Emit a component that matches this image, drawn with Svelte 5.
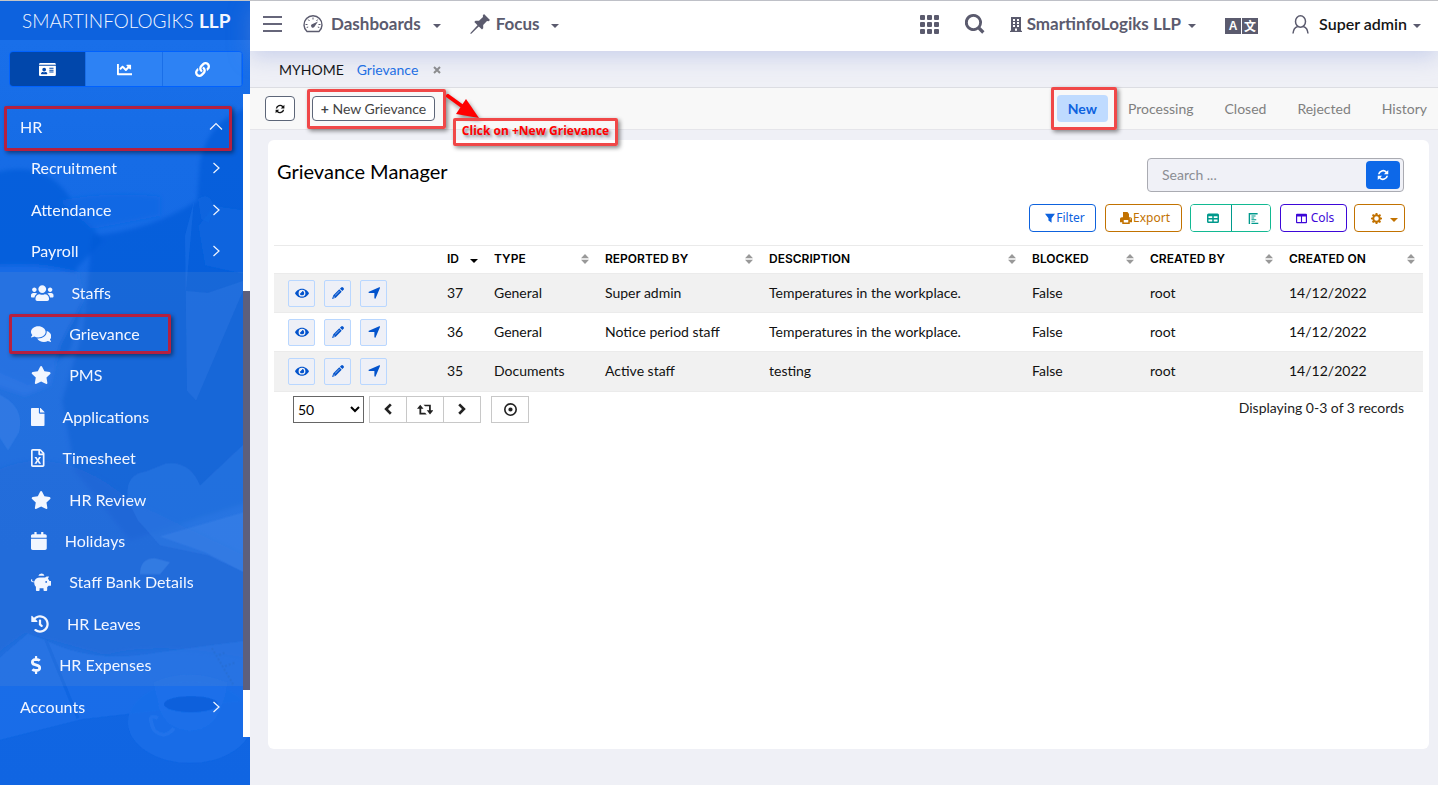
<script>
  const sideTabs = ['card', 'chart', 'link'];
  const groups = ['Recruitment', 'Attendance', 'Payroll'];
  const items = [
    { icon: 'users', label: 'Staffs' },
    { icon: 'comments', label: 'Grievance', marked: true },
    { icon: 'star', label: 'PMS' },
    { icon: 'file', label: 'Applications' },
    { icon: 'excel', label: 'Timesheet' },
    { icon: 'star', label: 'HR Review' },
    { icon: 'calendar', label: 'Holidays' },
    { icon: 'piggy', label: 'Staff Bank Details' },
    { icon: 'history', label: 'HR Leaves' },
    { icon: 'dollar', label: 'HR Expenses' }
  ];
  const filters = ['Processing', 'Closed', 'Rejected', 'History'];
  const columns = ['TYPE', 'REPORTED BY', 'DESCRIPTION', 'BLOCKED', 'CREATED BY', 'CREATED ON'];
  const rows = [
    ['37', 'General', 'Super admin', 'Temperatures in the workplace.', 'False', 'root', '14/12/2022'],
    ['36', 'General', 'Notice period staff', 'Temperatures in the workplace.', 'False', 'root', '14/12/2022'],
    ['35', 'Documents', 'Active staff', 'testing', 'False', 'root', '14/12/2022']
  ];
  // Solid glyphs: [viewBox width, viewBox height, path]
  const glyphs = {
    users: [640, 512, 'M96 224c35.3 0 64-28.7 64-64s-28.7-64-64-64-64 28.7-64 64 28.7 64 64 64zm448 0c35.3 0 64-28.7 64-64s-28.7-64-64-64-64 28.7-64 64 28.7 64 64 64zm32 32h-64c-17.6 0-33.5 7.1-45.1 18.6 40.3 22.1 68.9 62 75.1 109.4h66c17.7 0 32-14.3 32-32v-32c0-35.3-28.7-64-64-64zm-256 0c61.9 0 112-50.1 112-112S381.9 32 320 32 208 82.1 208 144s50.1 112 112 112zm76.8 32h-8.3c-20.8 10-43.9 16-68.5 16s-47.6-6-68.5-16h-8.3C179.6 288 128 339.6 128 403.2V432c0 26.5 21.5 48 48 48h288c26.5 0 48-21.5 48-48v-28.8c0-63.6-51.6-115.2-115.2-115.2zm-223.7-13.4C161.5 263.1 145.6 256 128 256H64c-35.3 0-64 28.7-64 64v32c0 17.7 14.3 32 32 32h65.9c6.3-47.4 34.9-87.3 75.2-109.4z'],
    comments: [576, 512, 'M416 192c0-88.4-93.1-160-208-160S0 103.6 0 192c0 34.3 14.1 65.9 38 92-13.4 30.2-35.5 54.2-35.8 54.5-2.2 2.3-2.8 5.7-1.5 8.7S4.8 352 8 352c36.6 0 66.9-12.3 88.7-25 32.2 15.7 70.3 25 111.3 25 114.9 0 208-71.6 208-160zm122 220c23.9-26 38-57.7 38-92 0-66.9-53.5-124.2-129.3-148.1.9 6.6 1.3 13.3 1.3 20.1 0 105.9-107.7 192-240 192-10.8 0-21.3-.8-31.7-1.9C207.8 439.6 281.8 480 368 480c41 0 79.1-9.2 111.3-25 21.8 12.7 52.1 25 88.7 25 3.2 0 6.1-1.9 7.3-4.8 1.3-2.9.7-6.3-1.5-8.7-.3-.3-22.4-24.2-35.8-54.5z'],
    star: [576, 512, 'M259.3 17.8L194 150.2 47.9 171.5c-26.2 3.8-36.7 36.1-17.7 54.6l105.7 103-25 145.5c-4.5 26.3 23.2 46 46.4 33.7L288 439.6l130.7 68.7c23.2 12.2 50.9-7.4 46.4-33.7l-25-145.5 105.7-103c19-18.5 8.5-50.8-17.7-54.6L382 150.2 316.7 17.8c-11.7-23.6-45.6-23.9-57.4 0z'],
    file: [384, 512, 'M224 136V0H24C10.7 0 0 10.7 0 24v464c0 13.3 10.7 24 24 24h336c13.3 0 24-10.7 24-24V160H248c-13.2 0-24-10.8-24-24zm160-14.1v6.1H256V0h6.1c6.4 0 12.5 2.5 17 7l97.9 98c4.5 4.5 7 10.6 7 16.9z'],
    excel: [384, 512, 'M370 98L286 14C277 5 265 0 252 0H48C22 0 0 22 0 48v416c0 26 22 48 48 48h288c26 0 48-22 48-48V132c0-13-5-25-14-34zM256 52l76 76h-76zM336 464H48V48h160v104c0 13 11 24 24 24h104zM98 224h60l34 58 34-58h60l-64 94 66 98h-62l-34-60-34 60H96l66-98z'],
    calendar: [448, 512, 'M12 192h424c6.6 0 12 5.4 12 12v260c0 26.5-21.5 48-48 48H48c-26.5 0-48-21.5-48-48V204c0-6.6 5.4-12 12-12zm436-44v-36c0-26.5-21.5-48-48-48h-48V12c0-6.6-5.4-12-12-12h-40c-6.6 0-12 5.4-12 12v52H160V12c0-6.6-5.4-12-12-12h-40c-6.6 0-12 5.4-12 12v52H48C21.5 64 0 85.5 0 112v36c0 6.6 5.4 12 12 12h424c6.6 0 12-5.4 12-12z'],
    piggy: [576, 512, 'M210 84a88 84 0 0 1 172-4c-22 0-44 0-62 0h-66c-16 0-32 1-44 4zM566 224h-42c-10-22-24-42-42-58l30-70h-40c-30 0-56 14-74 34-6-1-11-2-70-2h-76c-76 0-140 46-156 112H56c-16 0-30-16-22-34 4-10 4-26-10-26C10 180 0 186 0 204c0 30 26 56 56 56h36c0 58 16 106 48 132v96c0 13 8 24 24 24h56c14 0 24-10 24-24v-56h112v56c0 13 10 24 24 24h56c14 0 24-10 24-24v-88c16-12 28-26 38-40h58c6 0 20-8 20-16V240c0-10-4-16-10-16zm-134 56a26 26 0 1 1 0-52 26 26 0 0 1 0 52z'],
    history: [512, 512, 'M504 255.531c.253 136.64-111.18 248.372-247.82 248.468-59.015.042-113.223-20.53-155.822-54.911-11.077-8.94-11.905-25.541-1.839-35.607l11.267-11.267c8.609-8.609 22.353-9.551 31.891-1.984C173.062 425.135 212.781 440 256 440c101.705 0 184-82.311 184-184 0-101.705-82.311-184-184-184-48.814 0-93.149 18.969-126.068 49.932l50.754 50.754c10.08 10.08 2.941 27.314-11.313 27.314H24c-8.837 0-16-7.163-16-16V38.627c0-14.254 17.234-21.393 27.314-11.314l49.372 49.372C129.209 34.136 189.552 8 256 8c136.81 0 247.747 110.78 248 247.531zm-180.912 78.784l9.823-12.63c8.138-10.463 6.253-25.542-4.21-33.679L288 256.349V152c0-13.255-10.745-24-24-24h-16c-13.255 0-24 10.745-24 24v135.651l65.409 50.874c10.463 8.137 25.541 6.253 33.679-4.21z'],
    dollar: [288, 512, 'M209.2 233.4l-108-31.6C88.7 198.2 80 186.5 80 173.5c0-16.3 13.2-29.5 29.5-29.5h66.3c12.2 0 24.2 3.7 34.2 10.5 6.1 4.1 14.3 3.1 19.5-2l34.8-34c7.1-6.9 6.1-18.4-1.8-24.5C238 74.8 207.4 64.1 176 64V16c0-8.8-7.2-16-16-16h-32c-8.8 0-16 7.2-16 16v48h-2.5C45.8 64-5.4 118.7.5 183.6c4.2 46.1 39.4 83.6 83.8 96.6l102.5 30c12.5 3.7 21.2 15.3 21.2 28.3 0 16.3-13.2 29.5-29.5 29.5h-66.3C100 368 88 364.3 78 357.5c-6.1-4.1-14.3-3.1-19.5 2l-34.8 34c-7.1 6.9-6.1 18.4 1.8 24.5 24.5 19.2 55.1 29.9 86.5 30v48c0 8.8 7.2 16 16 16h32c8.8 0 16-7.2 16-16v-48.2c46.6-.9 90.3-28.6 105.7-72.7 21.5-61.6-14.6-124.8-72.5-141.7z'],
    card: [576, 512, 'M528 32H48C22 32 0 54 0 80v16h576V80c0-26-22-48-48-48zM0 432c0 26 22 48 48 48h480c26 0 48-22 48-48V128H0zM352 200h144v32H352zM352 264h144v32H352zM352 328h144v32H352zM176 192a64 64 0 1 1 0 128 64 64 0 0 1 0-128zM68 392c8-28 30-50 60-50 30 12 66 12 96 0 30 0 52 22 60 50 2 10-4 24-16 24H84c-12 0-18-14-16-24z'],
    chart: [512, 512, 'M64 64H0v360c0 13 11 24 24 24h488v-64H64zM344 96h120c9 0 16 7 16 16v118c0 22-26 32-40 18l-32-32-82 82c-12 12-32 12-45 0l-89-89-66 66-38-40c-6-6-6-16 0-22l80-80c12-12 32-12 45 0l89 89 58-58-32-32c-14-14-4-36 16-36z'],
    link: [512, 512, 'M326.612 185.391c59.747 59.809 58.927 155.698.36 214.59-.11.12-.24.25-.36.37l-67.2 67.2c-59.27 59.27-155.699 59.262-214.96 0-59.27-59.26-59.27-155.7 0-214.96l37.106-37.106c9.84-9.84 26.786-3.3 27.294 10.606.648 17.722 3.826 35.527 9.69 52.721 1.986 5.822.567 12.262-3.783 16.612l-13.087 13.087c-28.026 28.026-28.905 73.66-1.155 101.96 28.024 28.579 74.086 28.749 102.325.51l67.2-67.19c28.191-28.191 28.073-73.757 0-101.83-3.701-3.694-7.429-6.564-10.341-8.569a16.037 16.037 0 0 1-6.947-12.606c-.396-10.567 3.348-21.456 11.698-29.806l21.054-21.055c5.521-5.521 14.182-6.199 20.584-1.731a152.482 152.482 0 0 1 20.522 17.197zM467.547 44.449c-59.261-59.262-155.69-59.27-214.96 0l-67.2 67.2c-.12.12-.25.25-.36.37-58.566 58.892-59.387 154.781.36 214.59a152.454 152.454 0 0 0 20.521 17.196c6.402 4.468 15.064 3.789 20.584-1.731l21.054-21.055c8.35-8.35 12.094-19.239 11.698-29.806a16.037 16.037 0 0 0-6.947-12.606c-2.912-2.005-6.64-4.875-10.341-8.569-28.073-28.073-28.191-73.639 0-101.83l67.2-67.19c28.239-28.239 74.3-28.069 102.325.51 27.75 28.3 26.872 73.934-1.155 101.96l-13.087 13.087c-4.35 4.35-5.769 10.79-3.783 16.612 5.864 17.194 9.042 34.999 9.69 52.721.509 13.906 17.454 20.446 27.294 10.606l37.106-37.106c59.271-59.259 59.271-155.699.001-214.959z'],
    refresh: [16, 16, 'M1.2 7A7 7 0 0 1 13 3.2L15 1.2V7H9.2L11.4 4.800A4.800 4.800 0 0 0 3.400 7ZM14.800 9A7 7 0 0 1 3 12.800L1 14.800V9H6.800L4.600 11.200A4.800 4.800 0 0 0 12.600 9Z'],
    funnel: [16, 16, 'M0 1H16L10.5 8.5V15.5L5.5 12V8.5Z'],
    printer: [16, 16, 'M4 0H10L12 2.5V7H4ZM0 9Q0 7 2.500 7H13.500Q16 7 16 9V13.500H13V16H3V13.500H0ZM5 10.500V14H11V10.500ZM13 8.500V10H14.500V8.500Z'],
    table: [16, 16, 'M2 2H14Q16 2 16 4V12.5Q16 14.500 14 14.500H2Q0 14.500 0 12.500V4Q0 2 2 2ZM2 5.500V8H7V5.500ZM9 5.500V8H14V5.500ZM2 10V12.500H7V10ZM9 10V12.500H14V10Z'],
    chartbar: [16, 16, 'M1 0H14V2H3V16H1ZM5 3.500H11V5H5ZM5 6.500H9V8H5ZM5 9H12V10.500H5ZM5 11.500H10V12.500H5ZM5 14H15V16H5Z'],
    colsicon: [16, 16, 'M1.5 1H14.5Q16 1 16 2.500V13.500Q16 15 14.500 15H1.500Q0 15 0 13.500V2.500Q0 1 1.500 1ZM1.700 5V13.200H7.200V5ZM8.800 5V13.200H14.300V5Z'],
    gear: [16, 16, 'M6.8 0H9.2L9.7 2.2 11.1 2.8 13 1.5 14.6 3.2 13.3 5 13.9 6.4 16 6.8V9.2L13.9 9.6 13.3 11 14.6 12.8 12.9 14.5 11 13.3 9.7 13.9 9.2 16H6.8L6.3 13.9 4.9 13.3 3.1 14.5 1.4 12.8 2.7 11 2.1 9.6 0 9.2V6.8L2.1 6.4 2.7 5 1.4 3.2 3 1.5 4.9 2.7 6.3 2.2ZM8 4.700A3.300 3.300 0 1 0 8 11.300 3.300 3.300 0 1 0 8 4.700Z'],
    eye: [16, 16, 'M8 3C12 3 15 6 16 8.2 15 10.5 12 13.4 8 13.4S1 10.5 0 8.2C1 6 4 3 8 3ZM8 4.300A3.900 3.900 0 1 0 8 12.100 3.900 3.900 0 1 0 8 4.300ZM8 5.700A2.500 2.500 0 1 1 5.500 8.200H6.700Q6.800 7 8 6.900Z'],
    pencil: [16, 16, 'M10.600 2.200 12.200.6Q13.500-.5 14.700.7L15.400 1.400Q16.500 2.500 15.400 3.800L13.800 5.400ZM9.700 3.100 12.900 6.300 5 14.200 0 16 1.800 11ZM9.700 5.200 4 10.900 4.500 11.400 10.200 5.700ZM2.600 12.400 2 14 2.500 14.200 3.900 13.600Z'],
    locate: [16, 16, 'M15 .4Q16.400 0 16 1.400L10.200 15Q9.200 16.500 8.500 14.800V7.900H1.500Q-.3 7.200 1.200 6.200Z'],
    prev: [16, 16, 'M10.5.5 13 3 8 8 13 13 10.500 15.500 3 8Z'],
    next: [16, 16, 'M5.500.5 3 3 8 8 3 13 5.500 15.500 13 8Z'],
    retweet: [20, 16, 'M4 2 8 7H5.200V12H10L12 14H3V7H0ZM8 2H17V9H20L16 14 12 9H14.800V4H10Z'],
    target: [16, 16, 'M8 0A8 8 0 1 1 8 16 8 8 0 1 1 8 0ZM8 2A6 6 0 1 0 8 14 6 6 0 1 0 8 2ZM8 5.400A2.600 2.600 0 1 1 8 10.600 2.600 2.600 0 1 1 8 5.400Z'],
    pin: [20, 20, 'M14 0 20 6 18.600 7.200 17 7 13.200 11 13.200 14.200 12 15.500 8.800 12.500 1 20 .2 19.300 7.500 11.200 4.300 8 5.500 6.800 9 6.800 13 3 12.800 1.400Z'],
    search: [20, 20, 'M8.5 0A8.5 8.5 0 0 1 15.500 13.200L19.500 17.200 17.200 19.700 13 15.600A8.500 8.500 0 1 1 8.500 0ZM8.500 2.800A5.700 5.700 0 1 0 8.500 14.200 5.700 5.700 0 1 0 8.500 2.800Z'],
    building: [12, 15, 'M1 0H11V13.8H12V15H0V13.8H1ZM3 2V4H5V2ZM7 2V4H9V2ZM3 5V7H5V5ZM7 5V7H9V5ZM3 8V10H5V8ZM7 8V10H9V8ZM5 11.500V13.800H7V11.500Z']
  };
</script>

{#snippet icon(name, size)}
  <svg height={size} viewBox="0 0 {glyphs[name][0]} {glyphs[name][1]}" aria-hidden="true">
    <path fill="currentColor" fill-rule="evenodd" d={glyphs[name][2]} />
  </svg>
{/snippet}

{#snippet chevron()}
  <svg class="chev" width="8" height="12" viewBox="0 0 8 12" aria-hidden="true"><path d="M1.5 1 7 6 1.5 11" fill="none" stroke="currentColor" stroke-width="1.2" /></svg>
{/snippet}

<div class="app">
  <aside class="sidebar">
    <svg class="scene" viewBox="0 0 250 785" preserveAspectRatio="none" aria-hidden="true">
      <defs>
        <linearGradient id="shade" x2="0" y2="1">
          <stop offset="0" stop-color="#1a70ea" /><stop offset=".2" stop-color="#166ce6" />
          <stop offset=".7" stop-color="#1267e2" /><stop offset="1" stop-color="#1065e2" />
        </linearGradient>
        <filter id="soft" x="-10%" y="-10%" width="120%" height="120%"><feGaussianBlur stdDeviation="2" /></filter>
        <filter id="crisp"><feGaussianBlur stdDeviation=".6" /></filter>
      </defs>
      <rect width="250" height="785" fill="url(#shade)" />
      <g filter="url(#soft)">
        <path d="M-5 172Q40 160 65 190L103 240 76 268 83 305 70 350 30 385-5 370Z" fill="#045bd8" opacity=".75" />
        <path d="M-5 265Q30 262 60 268L78 272 83 300 60 345 50 385 25 395-5 385Z" fill="#2475ee" opacity=".55" />
        <path d="M60 200Q110 190 160 196L160 215 92 228Z" fill="#1268e4" opacity=".8" />
        <path d="M255 105Q210 115 200 160L197 200Q150 230 92 235L83 330 62 400 75 470 130 540 255 500Z" fill="#045ad7" opacity=".7" />
        <path d="M-5 470Q60 440 130 500L255 560V660Q160 640 105 655L25 633-5 655Z" fill="#0c60da" opacity=".55" />
      </g>
      <g filter="url(#crisp)">
        <path d="M215 205 250 210V275L205 265 198 225Z" fill="#1067e2" opacity=".5" />
        <path d="M198 198Q210 190 214 206L209 222 201 218Z" fill="#1d70e6" opacity=".35" />
        <path d="M194 200 185 235 187 390 196 400 243 290V280L208 292 186 290" fill="#2e7def" opacity=".3" />
        <path d="M-5 392Q26 404 19 432L8 450-5 430Z" fill="#3180ef" opacity=".45" />
        <path d="M128 500Q124 474 146 471L166 463Q190 460 200 485L250 438V575L208 555 160 545 138 520Z" fill="#2b7bee" opacity=".4" />
        <path d="M160 536 250 510V575L205 552Z" fill="#3a86f4" opacity=".35" />
        <path d="M140 574Q140 558 155 558L170 562 160 574Z" fill="#4790f6" opacity=".4" />
        <path d="M28 633 46 640Q90 662 145 654T250 640V700L82 719 0 740V657Z" fill="#1f74ee" opacity=".5" />
        <path d="M46 640 78 718" stroke="#0d60dc" stroke-width="3" opacity=".5" />
        <path d="M212 648 233 684M219 655 226 652M225 666 236 662" fill="none" stroke="#1d66d0" stroke-width="2" stroke-dasharray="2 2" opacity=".6" />
        <ellipse cx="190" cy="722" rx="62" ry="41" fill="#1b70ea" opacity=".65" />
        <path d="M153 682Q188 666 228 682L222 705Q214 730 190 731 160 728 158 700Z" fill="#1d71ea" opacity=".8" />
        <ellipse cx="191" cy="704" rx="27" ry="8" fill="#0b60dc" />
        <path d="M158 718Q146 712 154 730 165 740 174 728" fill="none" stroke="#2a7aee" stroke-width="4" opacity=".5" />
      </g>
    </svg>
    <a class="brand" href="#home">SMARTINFOLOGIKS <b>LLP</b></a>
    <div class="side-tabs">
      {#each sideTabs as t, i}
        <button class:on={i === 0} aria-label={t}>{@render icon(t, 15)}</button>
      {/each}
    </div>
    <nav class="menu">
      <div class="top">
        <a class="row root" href="#hr">HR
          <svg class="chev up" width="14" height="9" viewBox="0 0 14 9" aria-hidden="true"><path d="M1 7.5 7 1.5 13 7.5" fill="none" stroke="currentColor" stroke-width="1.2" /></svg>
          <span class="mark hr-mark"></span>
        </a>
        {#each groups as g}
          <a class="row sub" href="#{g}">{g}{@render chevron()}</a>
        {/each}
      </div>
      <div class="list">
        {#each items as it}
          <a class="row item" href="#{it.label}">
            {@render icon(it.icon, 18)}{it.label}
            {#if it.marked}<span class="mark item-mark"></span>{/if}
          </a>
        {/each}
      </div>
      <a class="row root last" href="#accounts">Accounts{@render chevron()}</a>
      <div class="track"><div class="thumb"></div></div>
    </nav>
  </aside>

  <main>
    <header>
      <button class="plain burger" aria-label="Toggle menu"><i></i><i></i><i></i></button>
      <a class="nav dash" href="#dashboards">
        <svg width="20" height="18" viewBox="0 0 20 18" aria-hidden="true">
          <path d="M4 16.5A9 9 0 1 1 16 16.5Z" fill="none" stroke="currentColor" stroke-width="1.4" stroke-linejoin="round" />
          <path d="M10 2.5V4.5M5.2 4.5 6.5 6M2.5 9.5H4.5M15.5 9.5H17.5M14.7 4.5 13.5 6M3.7 12.5 5.2 12M16.3 12.5 14.8 12" stroke="currentColor" stroke-width="1" />
          <path d="M8.5 9.5 15 6.5 11.3 12A1.8 1.8 0 0 1 8.5 9.5Z" fill="currentColor" />
        </svg>
        Dashboards <i class="caret"></i>
      </a>
      <a class="nav focus" href="#focus">{@render icon('pin', 20)} Focus <i class="caret"></i></a>
      <div class="right">
        <button class="plain" aria-label="Apps">
          <svg width="19" height="19" viewBox="0 0 19 19" fill="currentColor" aria-hidden="true">
            {#each [0, 7, 14] as x}{#each [0, 7, 14] as y}<rect {x} {y} width="5" height="5" rx="1" />{/each}{/each}
          </svg>
        </button>
        <button class="plain search-btn" aria-label="Search">{@render icon('search', 20)}</button>
        <a class="nav org" href="#org">{@render icon('building', 15)} SmartinfoLogiks LLP <i class="caret"></i></a>
        <button class="plain lang" aria-label="Language"><span>A</span><span class="cjk">文</span></button>
        <a class="nav user" href="#user">
          <svg width="17" height="19" viewBox="0 0 17 19" fill="none" stroke="#5b5b6e" stroke-width="1.5" aria-hidden="true">
            <ellipse cx="8.5" cy="6.5" rx="5" ry="5.7" /><path d="M1 18.5Q1.5 12.5 5.8 11.5M16 18.5Q15.5 12.5 11.2 11.5" />
          </svg>
          Super admin <i class="caret"></i>
        </a>
      </div>
    </header>

    <div class="tabs">
      <a href="#myhome">MYHOME</a>
      <a class="current" href="#grievance">Grievance</a>
      <button class="plain" aria-label="Close tab">
        <svg width="8" height="8" viewBox="0 0 8 8" aria-hidden="true"><path d="M1 1 7 7M7 1 1 7" stroke="#8c8c8c" stroke-width="2" /></svg>
      </button>
    </div>

    <div class="toolbar">
      <button class="tool" aria-label="Refresh">{@render icon('refresh', 10)}</button>
      <div class="new-wrap">
        <button class="tool new"><b>+</b> New Grievance</button>
        <span class="mark red new-mark"></span>
        <svg class="arrow" width="38" height="32" viewBox="0 0 38 32" aria-hidden="true">
          <path d="M2 3 20 16" stroke="#f00" stroke-width="4" stroke-linecap="round" /><path d="M20 6 33 25 10 21Z" fill="#f00" />
        </svg>
        <span class="mark red callout">Click on +New Grievance</span>
      </div>
      <nav class="status">
        <a class="active" href="#new">New<span class="mark red tab-mark"></span></a>
        {#each filters as f}<a href="#{f}">{f}</a>{/each}
      </nav>
    </div>

    <section class="card">
      <div class="card-head">
        <h1>Grievance Manager</h1>
        <div class="search">
          <input type="text" placeholder="Search ..." aria-label="Search records" />
          <button aria-label="Reload">{@render icon('refresh', 12)}</button>
        </div>
      </div>
      <div class="actions">
        <button class="act blue">{@render icon('funnel', 10)}Filter</button>
        <button class="act amber">{@render icon('printer', 12)}Export</button>
        <div class="pair">
          <button aria-label="Table view">{@render icon('table', 12)}</button>
          <button aria-label="Report view">{@render icon('chartbar', 11)}</button>
        </div>
        <button class="act purple">{@render icon('colsicon', 11)} Cols</button>
        <button class="act amber gear" aria-label="Settings">{@render icon('gear', 11)} <i class="caret"></i></button>
      </div>
      <table>
        <colgroup>
          <col class="c0" /><col class="c1" /><col class="c2" /><col class="c3" /><col class="c4" /><col class="c5" /><col class="c6" /><col class="c7" />
        </colgroup>
        <thead>
          <tr>
            <th aria-label="Actions"></th>
            <th><div class="th">ID <i class="caret"></i></div></th>
            {#each columns as c}
              <th><div class="th">{c}
                <svg width="8" height="10" viewBox="0 0 8 10" aria-hidden="true"><path d="M4 0 8 4.3H0ZM4 10 0 5.7H8Z" fill="#999" /></svg>
              </div></th>
            {/each}
          </tr>
        </thead>
        <tbody>
          {#each rows as r}
            <tr>
              <td>
                <div class="ops">
                  <button aria-label="View">{@render icon('eye', 14)}</button>
                  <button aria-label="Edit">{@render icon('pencil', 12)}</button>
                  <button aria-label="Forward">{@render icon('locate', 12)}</button>
                </div>
              </td>
              {#each r as cell}<td>{cell}</td>{/each}
            </tr>
          {/each}
        </tbody>
      </table>
      <div class="pager">
        <select aria-label="Records per page"><option>50</option></select>
        <div class="pages">
          <button aria-label="Previous">{@render icon('prev', 12)}</button>
          <button aria-label="Reload page">{@render icon('retweet', 13)}</button>
          <button aria-label="Next">{@render icon('next', 12)}</button>
        </div>
        <button class="locate" aria-label="Focus record">{@render icon('target', 13)}</button>
        <p>Displaying 0-3 of 3 records</p>
      </div>
    </section>
  </main>
</div>

<style>
  :global(body) { margin: 0; }
  * { box-sizing: border-box; }
  .app {
    display: grid;
    grid-template-columns: 250px minmax(0, 1fr);
    min-height: 100vh;
    border-top: 1px solid #c6c6c6;
    background: #eff0f6;
    color: #111;
    font: 14px/20px Lato, "Open Sans", sans-serif;
  }
  a { color: inherit; text-decoration: none; }
  button { font: inherit; color: inherit; cursor: pointer; padding: 0; }
  svg { display: block; flex: none; }
  .plain { border: 0; background: none; }
  .mark { position: absolute; border: 3px solid #b52040; border-radius: 2px; box-shadow: 2px 2px 4px rgba(0, 0, 0, .45); pointer-events: none; }
  .mark.red { border-color: #f04848; }
  .caret { width: 0; height: 0; border: 4px solid transparent; border-top-color: currentColor; border-bottom: 0; }

  .sidebar { position: relative; display: flex; flex-direction: column; background: #166be6; color: #f2f6ff; overflow: hidden; padding-bottom: 48px; }
  .scene { position: absolute; inset: 0; width: 100%; height: 100%; }
  .brand { position: relative; height: 39px; padding-left: 22px; font-size: 19px; line-height: 39px; font-weight: 300; background: #0d62de; white-space: nowrap; }
  .brand b { font-weight: 700; }
  .side-tabs { position: relative; display: grid; grid-template-columns: 76px 77px 1fr; height: 36px; margin: 11px 7px 7px 9px; border: 1px solid #0062ff; border-radius: 4px; overflow: hidden; flex: none; }
  .side-tabs button { display: grid; place-items: center; border: 0; border-right: 1px solid #1a6fe8; background: #2d82f4; color: #fff; }
  .side-tabs .on { background: #0147ab; }
  .menu { position: relative; flex: 1; padding: 12px 7px 0 0; font-size: 16px; }
  .top { display: grid; grid-auto-rows: 1fr; min-height: 166px; }
  .list { display: grid; grid-auto-rows: 1fr; min-height: 414px; background: rgba(110, 150, 200, .17); }
  .row { position: relative; display: flex; align-items: center; }
  .root { padding-left: 20px; }
  .sub { padding-left: 31px; }
  .item { padding-left: 31px; gap: 18px; }
  .last { height: 42px; }
  .chev { margin-left: auto; margin-right: 23px; }
  .up { margin-right: 20px; }
  .hr-mark { inset: 0 11px -3px 4px; }
  .item-mark { inset: 1px 72px 1px 9px; }
  .track { position: absolute; inset: 0 0 0 auto; width: 7px; background: #fff; padding: 197px 0 47px; }
  .thumb { height: 100%; background: #5d5f7c; }

  main { display: flex; flex-direction: column; min-width: 0; padding-bottom: 36px; }
  header { display: flex; align-items: center; height: 50px; padding: 0 17px 4px 13px; background: #fff; box-shadow: 0 6px 22px rgba(130, 150, 215, .35); color: #5b5b6e; flex: none; z-index: 1; }
  .burger { display: grid; gap: 5px; width: 19px; }
  .burger i { height: 2px; background: #66667a; }
  .nav { display: flex; align-items: center; gap: 8px; font-size: 17px; font-weight: 700; white-space: nowrap; }
  .nav .caret { margin-top: 4px; margin-left: 4px; }
  .dash { margin-left: 21px; }
  .focus { margin-left: 29px; gap: 6px; }
  .focus .caret { margin-left: 5px; }
  .right { display: flex; align-items: center; margin-left: auto; }
  .search-btn { margin-left: 26px; }
  .org { margin-left: 25px; gap: 5px; }
  .org .caret { margin-left: 2px; }
  .lang { display: flex; gap: 1px; margin-left: 29px; padding-top: 4px; }
  .lang span { width: 16px; height: 16px; background: #5b5b6e; color: #fff; font: 700 12px/16px "Liberation Sans", sans-serif; text-align: center; }
  .lang .cjk { font-family: "Noto Sans CJK SC", sans-serif; }
  .user { margin-left: 34px; gap: 10px; color: #151515; font-size: 16px; font-weight: 600; }
  .user .caret { margin-left: -4px; border-top-color: #5b5b6e; }

  .tabs { display: flex; align-items: center; height: 37px; padding: 2px 28px 0 29px; border-bottom: 1px solid #dcdde2; flex: none; }
  .current { margin-left: 13px; color: #1b6fe4; }
  .tabs button { margin-left: 15px; }
  .toolbar { display: flex; align-items: center; height: 42px; padding: 0 11px 0 15px; background: #f8f8f8; border-bottom: 1px solid #e5e5ea; flex: none; }
  .tool { display: grid; place-items: center; width: 30px; height: 25px; background: #fff; border: 1px solid #5d6678; border-radius: 4px; }
  .new-wrap { position: relative; margin-left: 17px; }
  .new { display: block; width: 123px; color: #444; line-height: 22px; }
  .new-mark { inset: -7px -11px -8px -5px; }
  .arrow { position: absolute; left: 134px; top: -3px; filter: drop-shadow(2px 3px 2px rgba(0, 0, 0, .4)); }
  .callout { left: 141px; top: 22px; width: 165px; height: 28px; color: #f00; font: 700 12px/20px "Open Sans", sans-serif; text-align: center; white-space: nowrap; text-shadow: 2px 2px 3px rgba(0, 0, 0, .45); }
  .status { display: flex; align-items: center; gap: 31px; margin-left: auto; color: #808080; }
  .active { position: relative; height: 27px; margin-right: -11px; padding: 0 11px; line-height: 27px; border-radius: 4px; background: #bfdbff; color: #0d62de; font-weight: 700; }
  .tab-mark { inset: -8px -9px -8px -6px; }

  .card { flex: 1; margin: 10px 9px 0 18px; padding: 18px 6px; background: #fff; border-radius: 6px; }
  .card-head { display: flex; justify-content: space-between; padding: 0 19px 0 3px; }
  h1 { margin: 0; font-size: 20px; line-height: 26px; font-weight: 400; color: #000; }
  .search { display: flex; width: 257px; height: 34px; padding: 2px 3px; border: 1px solid #aaabb2; border-radius: 4px; background: #f0f1f7; }
  .search input { flex: 1; min-width: 0; padding: 0 11px; border: 0; outline: 0; background: none; font: inherit; }
  .search input::placeholder { color: #8b8d93; }
  .search button { display: grid; place-items: center; width: 34px; border: 0; border-radius: 4px; background: #0d68e8; color: #fff; }
  .actions { display: flex; justify-content: flex-end; gap: 9px; padding: 12px 18px 13px 0; font-family: "Noto Sans", sans-serif; font-size: 12px; }
  .act { display: flex; align-items: center; justify-content: center; gap: 1px; width: 67px; height: 28px; background: #fff; border: 1px solid; border-radius: 4px; }
  .blue { color: #0d62de; padding-left: 5px; }
  .amber { width: 77px; padding-left: 3px; color: #c27200; }
  .purple { color: #3d08d8; gap: 4px; padding-left: 3px; }
  .gear { width: 51px; gap: 8px; margin-left: -2px; padding-left: 9px; }
  .gear .caret { margin-top: 4px; }
  .pair { display: grid; grid-template-columns: 1fr 1fr; width: 81px; margin-left: -1px; border: 1px solid #12b992; border-radius: 4px; color: #00998c; overflow: hidden; }
  .pair button { display: grid; place-items: center; padding-left: 5px; border: 0; background: #fff; }
  .pair button + button { border-left: 1px solid #00998c; }

  table { width: 100%; table-layout: fixed; border-collapse: collapse; }
  .c0 { width: 165px; } .c1 { width: 47px; } .c2 { width: 111px; } .c3 { width: 164px; }
  .c4 { width: 263px; } .c5 { width: 118px; } .c6 { width: 139px; } .c7 { width: 142px; }
  th, td { padding: 0 8px; text-align: left; white-space: nowrap; }
  th { height: 28px; padding-bottom: 2px; border-top: 1px solid #eaeaea; font: 600 12px/16px Inter, sans-serif; color: #000; }
  .th { display: flex; align-items: center; justify-content: space-between; }
  .th .caret { margin-top: 4px; }
  tbody tr { height: 39px; border-top: 1px solid #ebebeb; }
  tbody tr:nth-child(odd) { background: #f1f1f1; }
  .ops { display: flex; gap: 9px; padding-left: 6px; }
  .ops button { display: grid; place-items: center; width: 27px; height: 27px; background: #eef0f7; border: 1px solid #b9d7ff; border-radius: 2px; color: #0353cc; }
  .pager { display: flex; align-items: center; padding: 4px 19px 0; border-top: 1px solid #ebebeb; color: #222; }
  select { width: 71px; height: 27px; background: #fff; border: 1px solid #666; border-radius: 0; font: inherit; color: #000; }
  .pages { display: flex; margin-left: 5px; }
  .pages button, .locate { display: grid; place-items: center; width: 38px; height: 27px; background: #fff; border: 1px solid #c8c8c8; }
  .pages button + button { margin-left: -1px; }
  .locate { margin-left: 10px; }
  .pager p { margin: 0 0 2px auto; }
</style>
